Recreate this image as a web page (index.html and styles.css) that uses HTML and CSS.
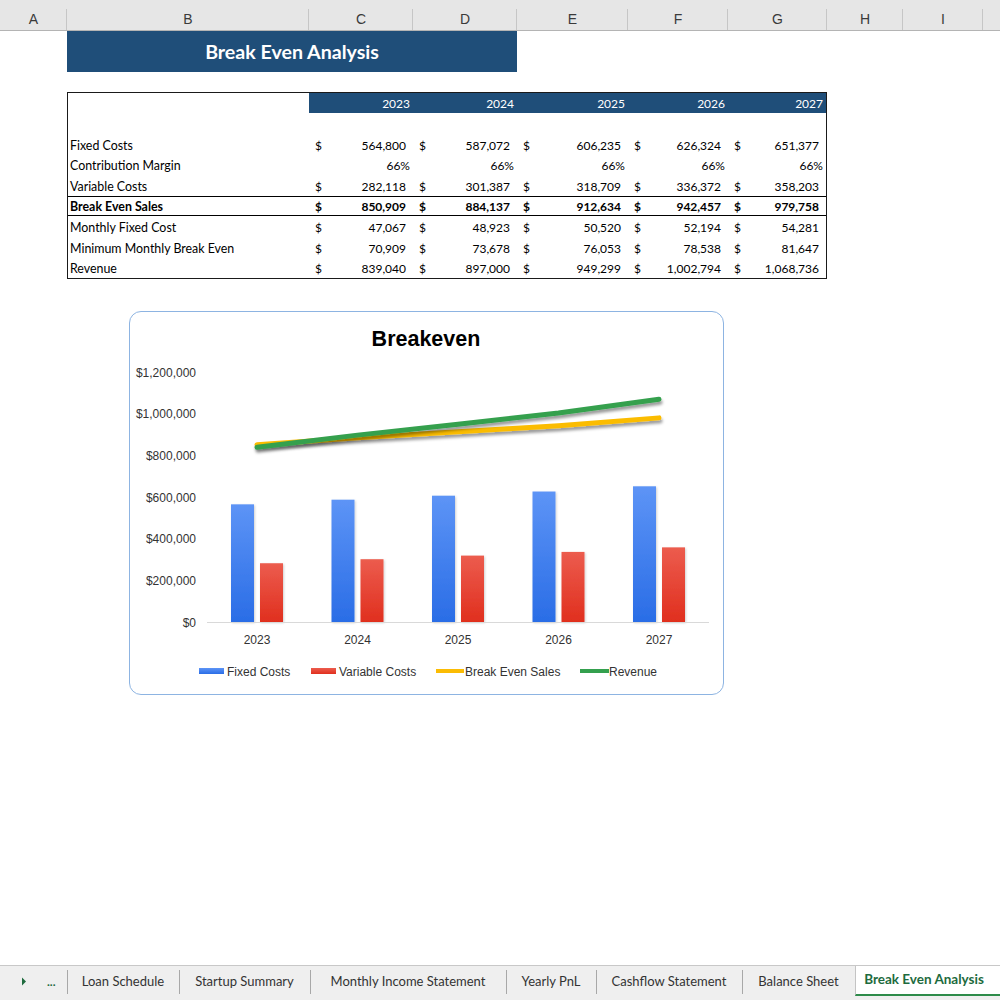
FILE: index.html
```html
<!DOCTYPE html>
<html>
<head>
<meta charset="utf-8">
<link rel="stylesheet" href="styles.css">
</head>
<body>
<div class="page">
  <div class="colheads">
    <div class="ch w-a">A</div>
    <div class="ch w-b">B</div>
    <div class="ch w-c">C</div>
    <div class="ch w-d">D</div>
    <div class="ch w-e">E</div>
    <div class="ch w-f">F</div>
    <div class="ch w-g">G</div>
    <div class="ch w-h">H</div>
    <div class="ch w-i">I</div>
    <div class="ch w-j"></div>
  </div>

  <div class="title">Break Even Analysis</div>

  <div class="sheet">
    <div class="row head">
      <div></div>
      <div class="yr">2023</div><div class="yr">2024</div><div class="yr">2025</div><div class="yr">2026</div><div class="yr">2027</div>
    </div>
    <div class="row blank"></div>
    <div class="row">
      <div class="lbl">Fixed Costs</div>
      <div class="val"><span>$</span><span>564,800</span></div>
      <div class="val"><span>$</span><span>587,072</span></div>
      <div class="val"><span>$</span><span>606,235</span></div>
      <div class="val"><span>$</span><span>626,324</span></div>
      <div class="val"><span>$</span><span>651,377</span></div>
    </div>
    <div class="row">
      <div class="lbl">Contribution Margin</div>
      <div class="pct">66%</div><div class="pct">66%</div><div class="pct">66%</div><div class="pct">66%</div><div class="pct">66%</div>
    </div>
    <div class="row">
      <div class="lbl">Variable Costs</div>
      <div class="val"><span>$</span><span>282,118</span></div>
      <div class="val"><span>$</span><span>301,387</span></div>
      <div class="val"><span>$</span><span>318,709</span></div>
      <div class="val"><span>$</span><span>336,372</span></div>
      <div class="val"><span>$</span><span>358,203</span></div>
    </div>
    <div class="row total">
      <div class="lbl">Break Even Sales</div>
      <div class="val"><span>$</span><span>850,909</span></div>
      <div class="val"><span>$</span><span>884,137</span></div>
      <div class="val"><span>$</span><span>912,634</span></div>
      <div class="val"><span>$</span><span>942,457</span></div>
      <div class="val"><span>$</span><span>979,758</span></div>
    </div>
    <div class="row">
      <div class="lbl">Monthly Fixed Cost</div>
      <div class="val"><span>$</span><span>47,067</span></div>
      <div class="val"><span>$</span><span>48,923</span></div>
      <div class="val"><span>$</span><span>50,520</span></div>
      <div class="val"><span>$</span><span>52,194</span></div>
      <div class="val"><span>$</span><span>54,281</span></div>
    </div>
    <div class="row">
      <div class="lbl">Minimum Monthly Break Even</div>
      <div class="val"><span>$</span><span>70,909</span></div>
      <div class="val"><span>$</span><span>73,678</span></div>
      <div class="val"><span>$</span><span>76,053</span></div>
      <div class="val"><span>$</span><span>78,538</span></div>
      <div class="val"><span>$</span><span>81,647</span></div>
    </div>
    <div class="row">
      <div class="lbl">Revenue</div>
      <div class="val"><span>$</span><span>839,040</span></div>
      <div class="val"><span>$</span><span>897,000</span></div>
      <div class="val"><span>$</span><span>949,299</span></div>
      <div class="val"><span>$</span><span>1,002,794</span></div>
      <div class="val"><span>$</span><span>1,068,736</span></div>
    </div>
  </div>

  <div class="chart">
    <svg class="chart-svg" width="593" height="382" viewBox="0 0 593 382">
      <defs>
        <linearGradient id="gBlue" x1="0" y1="0" x2="0" y2="1">
          <stop offset="0" stop-color="#5d94f6"/>
          <stop offset="1" stop-color="#2a6de6"/>
        </linearGradient>
        <linearGradient id="gRed" x1="0" y1="0" x2="0" y2="1">
          <stop offset="0" stop-color="#ec5c4e"/>
          <stop offset="1" stop-color="#e02f1e"/>
        </linearGradient>
        <filter id="shadow" x="-10%" y="-40%" width="120%" height="200%">
          <feDropShadow dx="1" dy="3" stdDeviation="1.8" flood-color="#000" flood-opacity="0.4"/>
        </filter>
        <filter id="barShadow" x="-20%" y="-5%" width="140%" height="110%">
          <feDropShadow dx="1" dy="1" stdDeviation="1" flood-color="#000" flood-opacity="0.18"/>
        </filter>
      </defs>
      <text class="ctitle" x="296" y="34" text-anchor="middle">Breakeven</text>

      <g class="ylab" text-anchor="end">
        <text x="66" y="64.5">$1,200,000</text>
        <text x="66" y="106.2">$1,000,000</text>
        <text x="66" y="147.8">$800,000</text>
        <text x="66" y="189.5">$600,000</text>
        <text x="66" y="231.2">$400,000</text>
        <text x="66" y="272.8">$200,000</text>
        <text x="66" y="314.5">$0</text>
      </g>

      <g filter="url(#barShadow)">
        <rect x="101" y="192.33" width="23" height="117.67" fill="url(#gBlue)"/>
        <rect x="201.5" y="187.69" width="23" height="122.31" fill="url(#gBlue)"/>
        <rect x="302" y="183.7" width="23" height="126.3" fill="url(#gBlue)"/>
        <rect x="402.5" y="179.52" width="23" height="130.48" fill="url(#gBlue)"/>
        <rect x="503" y="174.3" width="23" height="135.7" fill="url(#gBlue)"/>
        <rect x="130" y="251.23" width="23" height="58.77" fill="url(#gRed)"/>
        <rect x="230.5" y="247.21" width="23" height="62.79" fill="url(#gRed)"/>
        <rect x="331" y="243.6" width="23" height="66.4" fill="url(#gRed)"/>
        <rect x="431.5" y="239.92" width="23" height="70.08" fill="url(#gRed)"/>
        <rect x="532" y="235.37" width="23" height="74.63" fill="url(#gRed)"/>
      </g>

      <line x1="77" y1="310.5" x2="579" y2="310.5" stroke="#d9d9d9" stroke-width="1"/>

      <polyline points="127,132.73 227.5,125.8 328,119.87 428.5,113.65 529,105.88" fill="none" stroke="#fbbc04" stroke-width="5" stroke-linecap="round" stroke-linejoin="round" filter="url(#shadow)"/>
      <polyline points="127,135.2 227.5,123.12 328,112.23 428.5,101.08 529,87.35" fill="none" stroke="#34a04e" stroke-width="5" stroke-linecap="round" stroke-linejoin="round" filter="url(#shadow)"/>

      <g class="xlab" text-anchor="middle">
        <text x="127" y="331.5">2023</text>
        <text x="227.5" y="331.5">2024</text>
        <text x="328" y="331.5">2025</text>
        <text x="428.5" y="331.5">2026</text>
        <text x="529" y="331.5">2027</text>
      </g>

      <g class="legend">
        <rect x="69" y="356" width="25" height="6" fill="url(#gBlue)"/>
        <text x="97" y="363.5">Fixed Costs</text>
        <rect x="181" y="356" width="25" height="6" fill="url(#gRed)"/>
        <text x="209" y="363.5">Variable Costs</text>
        <line x1="306" y1="359" x2="334" y2="359" stroke="#fbbc04" stroke-width="4"/>
        <text x="335" y="363.5">Break Even Sales</text>
        <line x1="450" y1="359" x2="479" y2="359" stroke="#34a04e" stroke-width="4"/>
        <text x="479" y="363.5">Revenue</text>
      </g>
    </svg>
  </div>

  <div class="tabs">
    <div class="tab-nav">
      <svg class="nav-arrow" width="6" height="9" viewBox="0 0 6 9"><path d="M1 0.5 L5 4.5 L1 8.5 Z" fill="#1f6b3e"/></svg>
      <span class="dots">...</span>
    </div>
    <div class="tab t1">Loan Schedule</div>
    <div class="tab t2">Startup Summary</div>
    <div class="tab t3">Monthly Income Statement</div>
    <div class="tab t4">Yearly PnL</div>
    <div class="tab t5">Cashflow Statement</div>
    <div class="tab t6">Balance Sheet</div>
    <div class="tab active">Break Even Analysis</div>
  </div>
</div>
</body>
</html>
```

FILE: styles.css
```css
* { box-sizing: border-box; }

body {
  margin: 0;
  background: #fff;
  font-family: Lato, "Liberation Sans", sans-serif;
}

.page {
  height: 1000px;
  display: flex;
  flex-direction: column;
  overflow: hidden;
}

/* column headers */
.colheads {
  display: flex;
  flex-shrink: 0;
  height: 31px;
  background: #e6e6e6;
  border-bottom: 1px solid #b4b4b4;
}
.ch {
  font-family: "Liberation Sans", Arial, sans-serif;
  font-size: 14px;
  color: #3a3a3a;
  display: flex;
  align-items: center;
  justify-content: center;
  padding-top: 8px;
  background: linear-gradient(#c6c6c6, #c6c6c6) right bottom / 1px 21px no-repeat;
}
.w-a { width: 67px; }
.w-b { width: 242px; }
.w-c { width: 104px; }
.w-d { width: 104px; }
.w-e { width: 111px; }
.w-f { width: 100px; }
.w-g { width: 99px; }
.w-h { width: 76px; }
.w-i { width: 80px; }
.w-j { flex: 1; background: none; }

/* title band */
.title {
  flex-shrink: 0;
  margin-left: 67px;
  width: 450px;
  height: 41px;
  background: #1f4e79;
  color: #fff;
  font-family: Lato, sans-serif;
  font-weight: bold;
  font-size: 19.6px;
  display: flex;
  align-items: center;
  justify-content: center;
}

/* data table */
.sheet {
  flex-shrink: 0;
  margin: 20px 0 0 67px;
  width: 760px;
  border: 1px solid #1a1a1a;
  font-family: Lato, sans-serif;
  font-size: 12px;
  color: #000;
}
.row {
  display: grid;
  grid-template-columns: 241px 104px 104px 111px 100px 98px;
  height: 20.6px;
  align-items: center;
  padding-top: 2px;
}
.row.head { height: 20px; align-items: stretch; padding-top: 0; }
.row.blank { height: 21px; }
.row.total {
  font-weight: bold;
  border-top: 1px solid #000;
  border-bottom: 1px solid #000;
  padding-top: 1px;
}
.yr {
  background: #1f4e79;
  color: #fff;
  display: flex;
  align-items: center;
  justify-content: flex-end;
  padding-right: 3px;
}
.lbl { padding-left: 2px; white-space: nowrap; font-size: 12.4px; }
.val {
  display: flex;
  justify-content: space-between;
  padding: 0 7px 0 6px;
}
.pct { text-align: right; padding-right: 3px; }

/* chart */
.chart {
  flex-shrink: 0;
  margin: 32px 0 0 129px;
  width: 595px;
  height: 384px;
  border: 1px solid #8db4e2;
  border-radius: 12px;
  background: #fff;
}
.chart-svg { display: block; }
.ctitle {
  font-family: "Liberation Sans", Arial, sans-serif;
  font-weight: bold;
  font-size: 21.5px;
  fill: #000;
}
.ylab text, .xlab text, .legend text {
  font-family: "Liberation Sans", Arial, sans-serif;
  font-size: 12px;
  fill: #333;
}

/* sheet tabs */
.tabs {
  margin-top: auto;
  flex-shrink: 0;
  height: 35px;
  background: #efefef;
  border-top: 1px solid #c8c8c8;
  display: flex;
  font-family: Lato, sans-serif;
  font-size: 13px;
  color: #333;
}
.tab-nav {
  width: 67px;
  display: flex;
  align-items: center;
  padding-left: 21px;
  padding-bottom: 3px;
  gap: 20px;
}
.dots { color: #1f6b3e; font-weight: bold; font-size: 12px; }
.tab {
  display: flex;
  align-items: center;
  justify-content: center;
  padding-bottom: 5px;
  white-space: nowrap;
  background: linear-gradient(#a8a8a8, #a8a8a8) left 4px / 1px 24px no-repeat;
}
.t1 { width: 112px; }
.t2 { width: 131px; }
.t3 { width: 196px; }
.t4 { width: 90px; }
.t5 { width: 146px; }
.t6 { width: 113px; }
.tab.active {
  flex: 1;
  background: #fff;
  color: #1d6b3e;
  font-weight: bold;
  font-size: 13.5px;
  border-left: 1px solid #c4c4c4;
  border-bottom: 2px solid #2e8b4a;
  margin-bottom: 4px;
  padding-bottom: 2px;
  padding-left: 0;
  padding-right: 8px;
}
```
